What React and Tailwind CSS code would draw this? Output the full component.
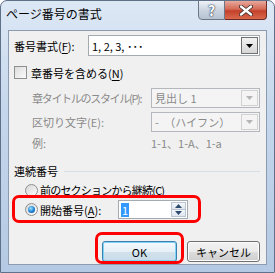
import React from "react"

const font = { fontFamily: '"Noto Sans CJK JP", "Noto Sans", sans-serif' }

function Arrow({ up = false, color = "#000", w = 7 }) {
  return (
    <svg width={w} height="4" viewBox="0 0 7 4">
      {up ? <path d="M0 4 L3.5 0 L7 4 Z" fill={color} /> : <path d="M0 0 L7 0 L3.5 4 Z" fill={color} />}
    </svg>
  )
}

function Combo({ text, disabled, className }) {
  return (
    <div
      className={`flex items-stretch border ${
        disabled ? "border-[#b4b8bc] bg-[#f4f4f4] text-[#8a8a8a]" : "border-[#a5a9b0] bg-white text-black"
      } ${className}`}
    >
      <div className="flex-1 flex items-center pl-[3px] whitespace-nowrap">{text}</div>
      <div
        className={`w-[17px] m-[1px] flex items-center justify-center border ${
          disabled
            ? "border-[#d2d2d2] bg-[#f4f4f4]"
            : "border-[#707070] bg-[linear-gradient(#f2f2f2,#d6d6d6)]"
        }`}
      >
        <Arrow color={disabled ? "#b5b5b5" : "#000"} />
      </div>
    </div>
  )
}

function Radio({ checked }) {
  return (
    <div className="shrink-0 w-[13px] h-[13px] rounded-full border border-[#8e8f8f] bg-[linear-gradient(135deg,#d6d6d6,#fdfdfd)] flex items-center justify-center">
      {checked && (
        <div className="w-[7px] h-[7px] rounded-full bg-[radial-gradient(circle_at_40%_35%,#9be4ff,#1f7fd0_55%,#0d4f9a)]" />
      )}
    </div>
  )
}

function Key({ children }) {
  return <span className="underline underline-offset-2">{children}</span>
}

export default function App() {
  return (
    <div
      className="w-[275px] h-[273px] flex flex-col rounded-t-[7px] border border-[#5f7089] bg-[linear-gradient(#dde8f5,#c5d7ec_40%,#b4c9e3)] text-[11px] leading-[14px] overflow-hidden whitespace-nowrap"
      style={font}
    >
      {/* title bar */}
      <div className="h-[29px] shrink-0 flex items-start">
        <div className="pl-[5px] pt-[5px] text-black text-[12px] leading-[16px]">ページ番号の書式</div>
        <div className="flex-1" />
        <div className="flex mr-[7px] -mt-[1px]">
          <div className="w-[27px] h-[20px] rounded-bl-[4px] border border-[#6c7888] bg-[linear-gradient(#eef2f7,#cbd5e1_50%,#b7c3d2)] flex items-center justify-center text-[#ffffff] font-bold text-[14px] leading-none [text-shadow:0_0_2px_#1f2f45,0_0_1px_#1f2f45]">
            ?
          </div>
          <div className="w-[42px] h-[20px] rounded-br-[4px] border border-l-0 border-[#6e2a22] bg-[linear-gradient(#e8a99d,#d46a55_45%,#c4402a_55%,#d86a4e)] flex items-center justify-center">
            <svg width="14" height="11" viewBox="0 0 14 11">
              <path d="M2 1.5 L12 9.5 M12 1.5 L2 9.5" stroke="#3b2a2a" strokeWidth="4" strokeLinecap="round" />
              <path d="M2 1.5 L12 9.5 M12 1.5 L2 9.5" stroke="#ffffff" strokeWidth="2.4" strokeLinecap="round" />
            </svg>
          </div>
        </div>
      </div>

      {/* client area */}
      <div className="mx-[7px] h-[235px] shrink-0 relative border border-[#8d9bb0] bg-[#f0f0f0] text-black flex flex-col">
        <div className="mt-[4px] h-[21px] flex items-center">
          <div className="w-[74px] ml-[5px]">
            番号書式(<Key>F</Key>):
          </div>
          <Combo text="1, 2, 3, ･･･" className="w-[172px] h-[21px]" />
        </div>

        <div className="mt-[10px] h-[13px] flex items-center ml-[5px]">
          <div className="w-[13px] h-[13px] border border-[#8e8f8f] bg-[linear-gradient(135deg,#dcdcdc,#fbfbfb)]" />
          <div className="ml-[4px]">
            章番号を含める(<Key>N</Key>)
          </div>
        </div>

        <div className="mt-[9px] h-[20px] flex items-center text-[#8a8a8a]">
          <div className="w-[119px] ml-[23px] tracking-[-1.3px]">章タイトルのスタイル(P):</div>
          <Combo text="見出し 1" disabled className="w-[109px] h-[20px]" />
        </div>
        <div className="mt-[4px] h-[20px] flex items-center text-[#8a8a8a]">
          <div className="w-[119px] ml-[23px]">区切り文字(E):</div>
          <Combo text="-　（ハイフン）" disabled className="w-[109px] h-[20px]" />
        </div>
        <div className="mt-[3px] h-[16px] flex items-center text-[#8a8a8a]">
          <div className="w-[119px] ml-[23px]">例:</div>
          <div>1-1、1-A、1-a</div>
        </div>

        <div className="mt-[12px] h-[16px] flex items-center ml-[5px] mr-[6px]">
          <div>連続番号</div>
          <div className="flex-1 ml-[6px] h-px bg-[#d5dfe5]" />
        </div>

        <div className="mt-[3px] h-[16px] flex items-center ml-[16px]">
          <Radio />
          <div className="ml-[2px] tracking-[-0.8px]">
            前のセクションから継続(<Key>C</Key>)
          </div>
        </div>

        <div className="mt-[2px] h-[19px] flex items-center ml-[16px]">
          <Radio checked />
          <div className="ml-[2px] w-[78px]">
            開始番号(<Key>A</Key>):
          </div>
          <div className="w-[70px] h-[19px] border border-[#a5a9b0] bg-white flex items-stretch">
            <div className="flex-1 flex items-center pl-[2px]">
              <span className="bg-[#3399ff] text-white px-[1px] leading-[14px]">1</span>
            </div>
            <div className="w-[15px] m-[1px] flex flex-col">
              <div className="flex-1 flex items-center justify-center border border-[#b8c4d2] bg-[linear-gradient(#f4f7fa,#dfe6ee)]">
                <Arrow up color="#2c4a6e" w={7} />
              </div>
              <div className="flex-1 flex items-center justify-center border border-t-0 border-[#b8c4d2] bg-[linear-gradient(#f4f7fa,#dfe6ee)]">
                <Arrow color="#2c4a6e" w={7} />
              </div>
            </div>
          </div>
        </div>

        <div className="mt-[22px] h-[21px] flex items-center ml-[93px]">
          <div className="w-[75px] h-[21px] rounded-[3px] border border-[#3c7fb1] bg-[linear-gradient(#f4f9fc,#e6f0f6_50%,#d2e2ec_51%,#c8dbe7)] shadow-[inset_0_0_0_1px_#7fd4f5] flex items-center justify-center">
            OK
          </div>
          <div className="ml-[10px] w-[73px] h-[21px] rounded-[3px] border border-[#707070] bg-[linear-gradient(#f2f2f2,#ebebeb_50%,#dddddd_51%,#cfcfcf)] shadow-[inset_0_0_0_1px_#fcfcfc] flex items-center justify-center">
            キャンセル
          </div>
        </div>

        {/* red annotation boxes */}
        <div className="absolute left-[3px] top-[164px] w-[189px] h-[28px] rounded-[7px] border-[3px] border-[#ff0000]" />
        <div className="absolute left-[86px] top-[201px] w-[89px] h-[32px] rounded-[7px] border-[3px] border-[#ff0000]" />
      </div>
    </div>
  )
}
